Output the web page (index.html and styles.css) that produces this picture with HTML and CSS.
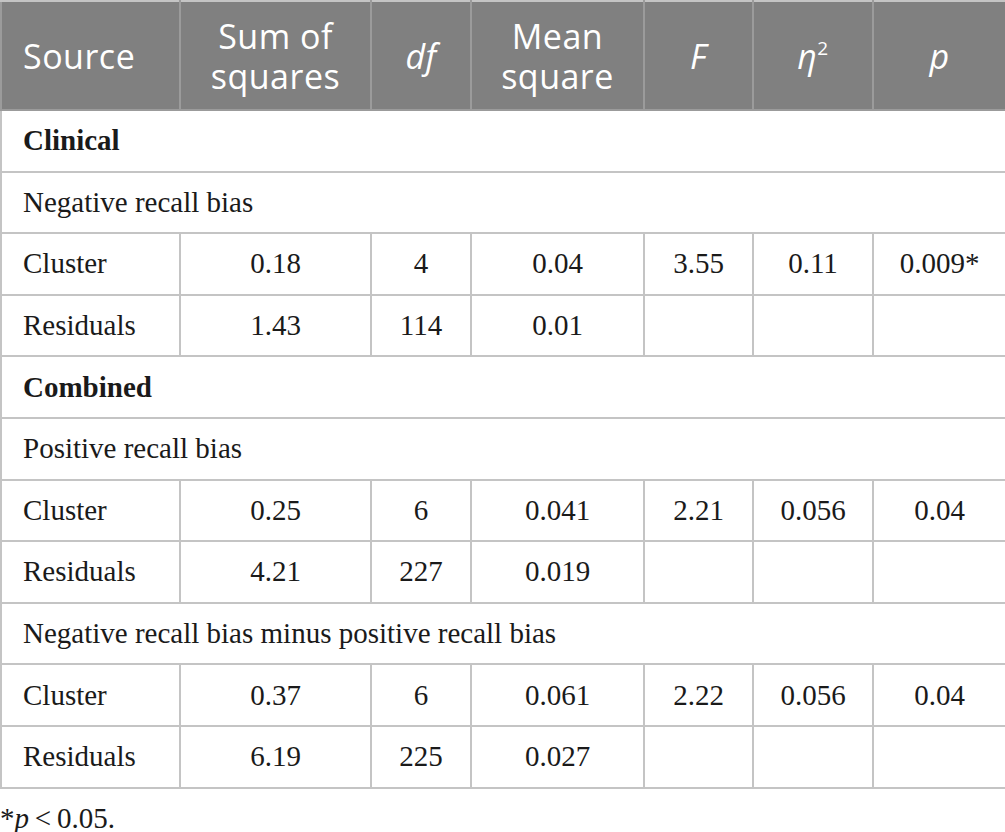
FILE: index.html
```html
<!DOCTYPE html>
<html lang="en">
<head>
    <meta charset="UTF-8">
    <title>ANOVA table</title>
    <link rel="stylesheet" href="styles.css">
</head>
<body>
    <table class="anova">
        <colgroup>
            <col class="c-source">
            <col class="c-ss">
            <col class="c-df">
            <col class="c-ms">
            <col class="c-f">
            <col class="c-eta">
            <col class="c-p">
        </colgroup>
        <thead>
            <tr>
                <th class="left">Source</th>
                <th>Sum of squares</th>
                <th><i>df</i></th>
                <th>Mean square</th>
                <th><i>F</i></th>
                <th><i>η</i><sup>2</sup></th>
                <th><i>p</i></th>
            </tr>
        </thead>
        <tbody>
            <tr class="section"><td colspan="7"><b>Clinical</b></td></tr>
            <tr class="section"><td colspan="7">Negative recall bias</td></tr>
            <tr>
                <td class="left">Cluster</td>
                <td>0.18</td>
                <td>4</td>
                <td>0.04</td>
                <td>3.55</td>
                <td>0.11</td>
                <td>0.009*</td>
            </tr>
            <tr>
                <td class="left">Residuals</td>
                <td>1.43</td>
                <td>114</td>
                <td>0.01</td>
                <td></td>
                <td></td>
                <td></td>
            </tr>
            <tr class="section"><td colspan="7"><b>Combined</b></td></tr>
            <tr class="section"><td colspan="7">Positive recall bias</td></tr>
            <tr>
                <td class="left">Cluster</td>
                <td>0.25</td>
                <td>6</td>
                <td>0.041</td>
                <td>2.21</td>
                <td>0.056</td>
                <td>0.04</td>
            </tr>
            <tr>
                <td class="left">Residuals</td>
                <td>4.21</td>
                <td>227</td>
                <td>0.019</td>
                <td></td>
                <td></td>
                <td></td>
            </tr>
            <tr class="section"><td colspan="7">Negative recall bias minus positive recall bias</td></tr>
            <tr>
                <td class="left">Cluster</td>
                <td>0.37</td>
                <td>6</td>
                <td>0.061</td>
                <td>2.22</td>
                <td>0.056</td>
                <td>0.04</td>
            </tr>
            <tr>
                <td class="left">Residuals</td>
                <td>6.19</td>
                <td>225</td>
                <td>0.027</td>
                <td></td>
                <td></td>
                <td></td>
            </tr>
        </tbody>
    </table>
    <p class="footnote">*<i>p</i>&thinsp;&lt;&thinsp;0.05.</p>
</body>
</html>
```

FILE: styles.css
```css
body {
    margin: 0;
    padding: 0;
    background-color: #ffffff;
    color: #1a1a1a;
    font-family: "Liberation Serif", "Times New Roman", serif;
}

.anova {
    width: 1005px;
    border-collapse: collapse;
    table-layout: fixed;
    border: 2px solid #c4c4c4;
}

.c-source { width: 179px; }
.c-ss { width: 191px; }
.c-df { width: 100px; }
.c-ms { width: 173px; }
.c-f { width: 109px; }
.c-eta { width: 120px; }
.c-p { width: 133px; }

/* header row */
th {
    background-color: #808080;
    color: #ffffff;
    font-family: "Open Sans", "Liberation Sans", sans-serif;
    font-weight: 400;
    font-size: 34px;
    letter-spacing: 0.5px;
    line-height: 40px;
    height: 107px;
    padding: 0 10px;
    text-align: center;
    border: 2px solid #9b9b9b;
    border-top-color: #c4c4c4;
}

th sup {
    font-size: 19px;
    vertical-align: 14px;
    line-height: 0;
}

td {
    font-size: 29px;
    height: 59.6px;
    padding: 0 10px;
    text-align: center;
    border: 2px solid #c4c4c4;
}

th.left, td.left {
    text-align: left;
    padding-left: 21px;
}

.section td {
    text-align: left;
    padding-left: 21px;
}

.footnote {
    margin: 13px 0 0 0;
    font-size: 29px;
}
```
